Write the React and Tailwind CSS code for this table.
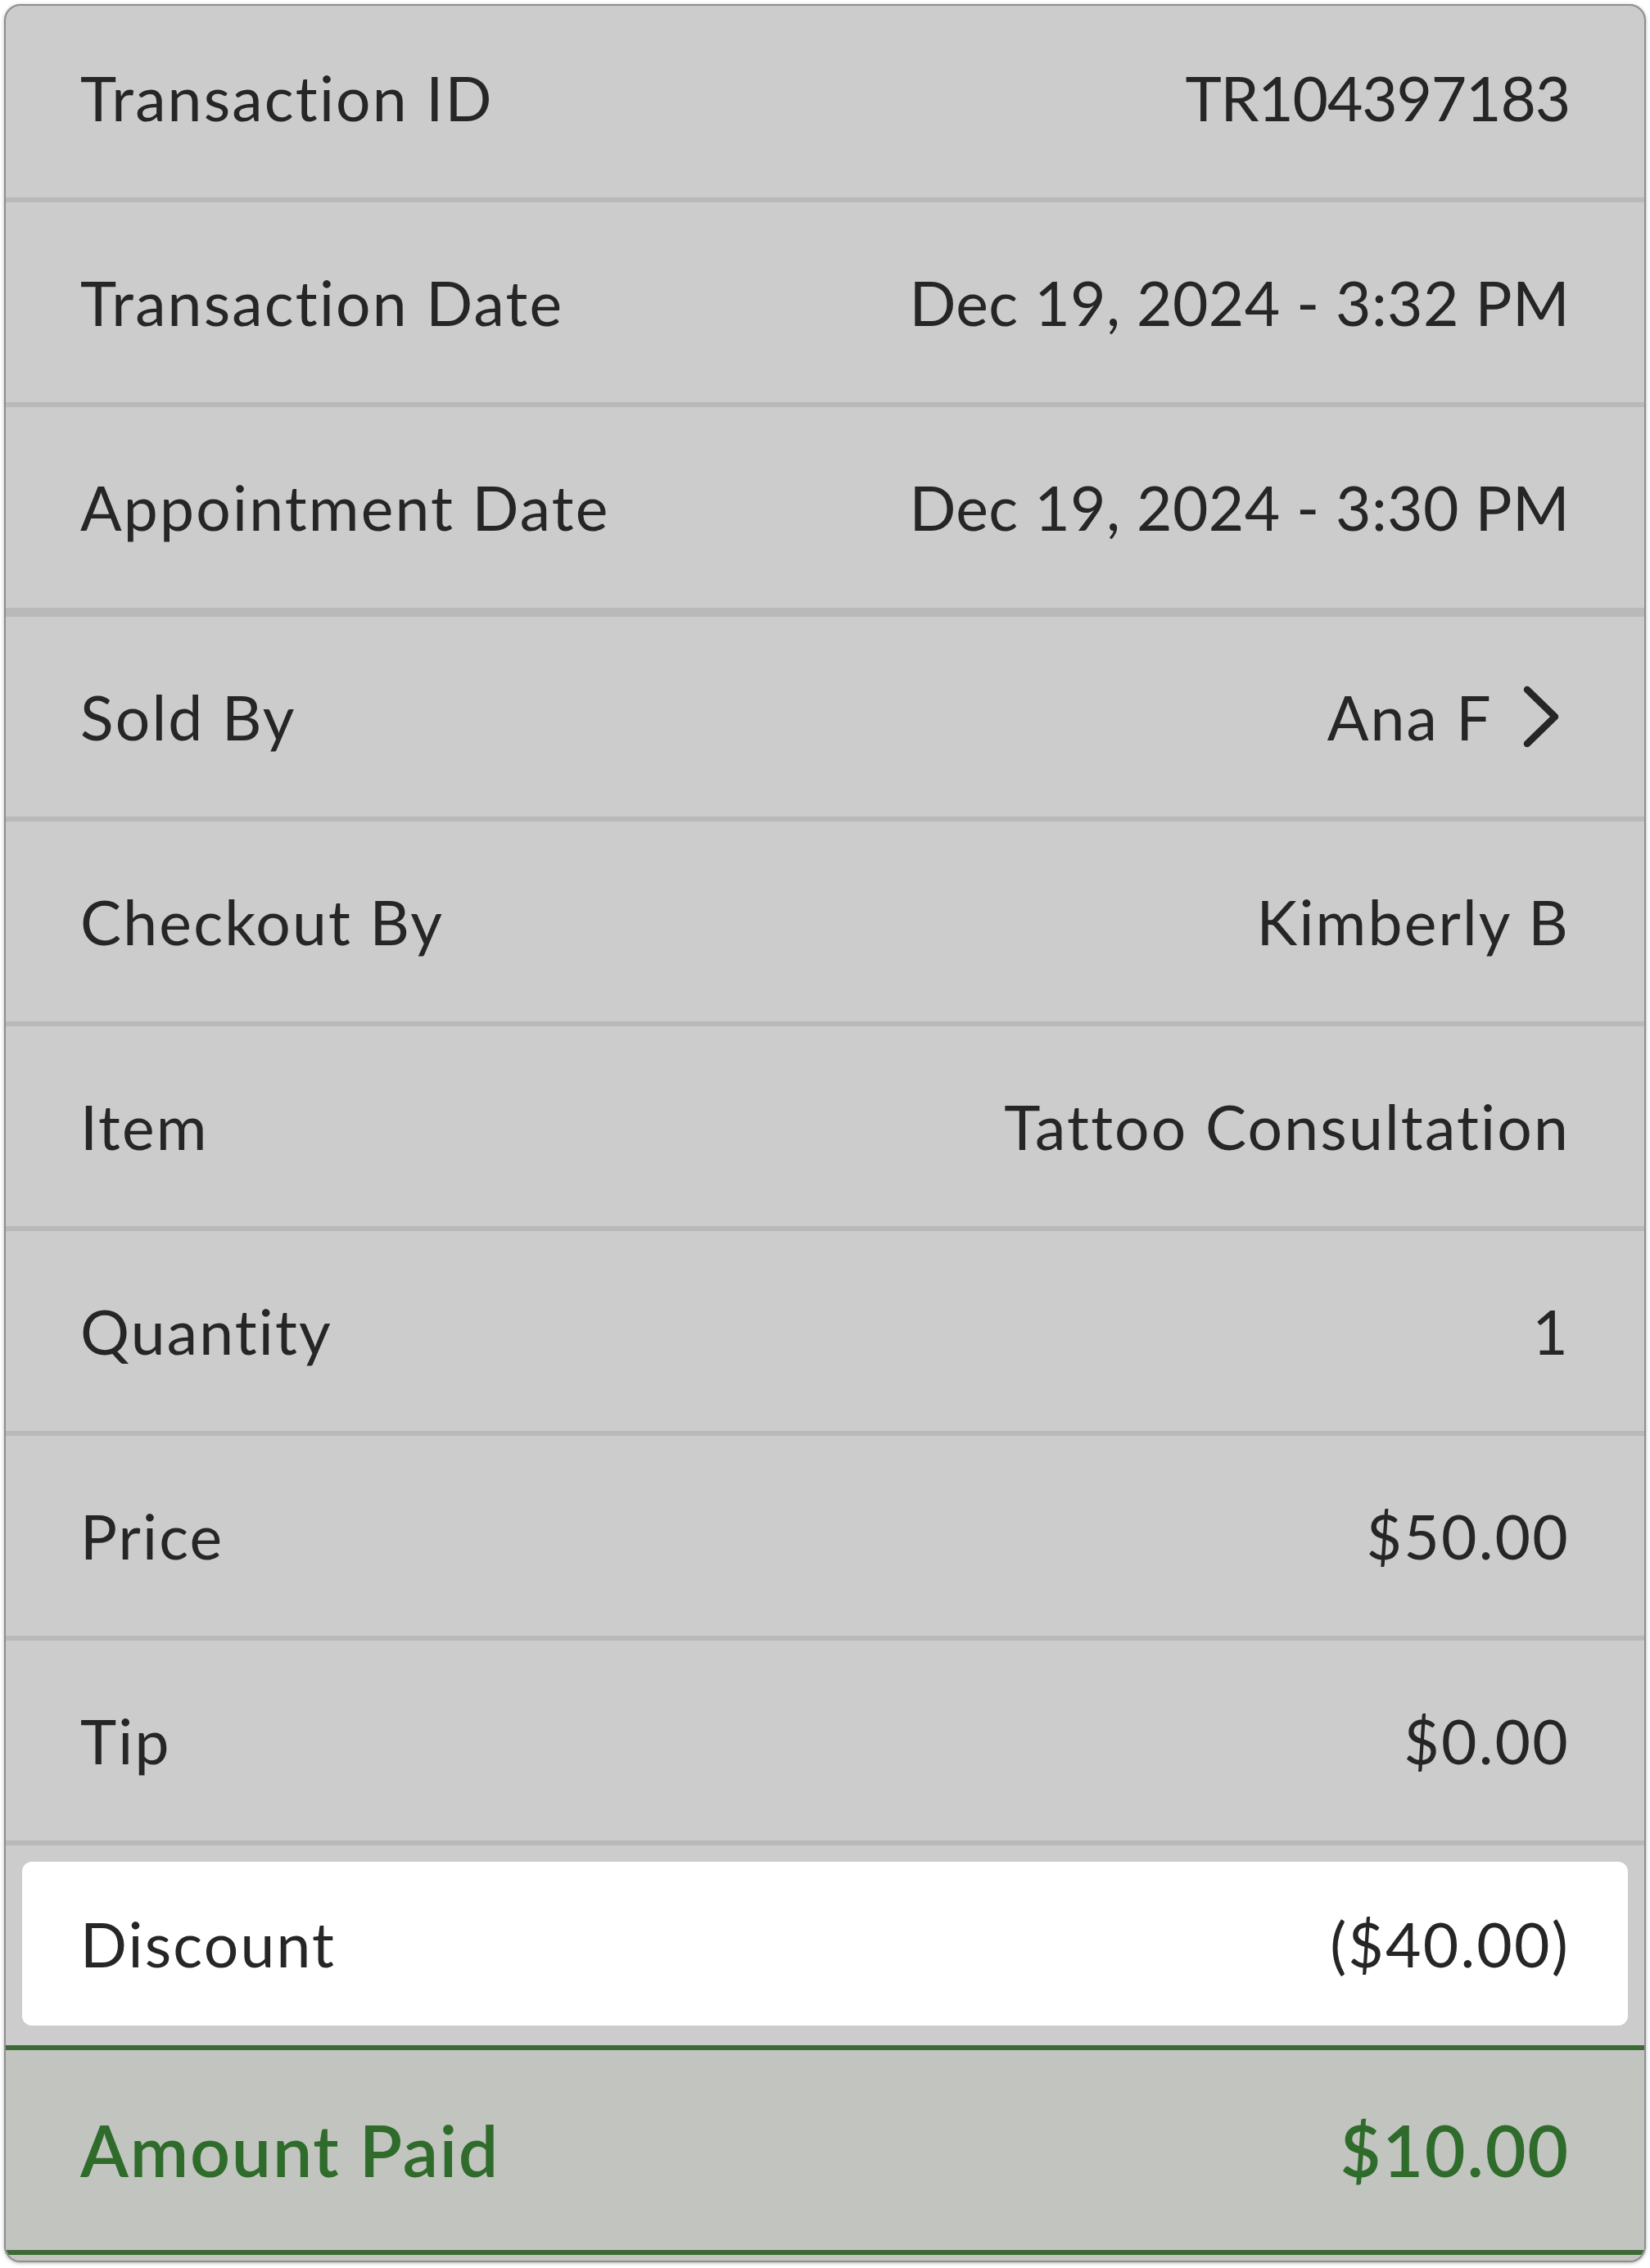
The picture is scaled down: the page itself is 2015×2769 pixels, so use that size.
import React from "react";

const rows = [
  { label: "Transaction ID", value: "TR104397183", tracking: "tracking-[-1.2px]" },
  { label: "Transaction Date", value: "Dec 19, 2024 - 3:32 PM", tracking: "tracking-[0.4px]" },
  { label: "Appointment Date", value: "Dec 19, 2024 - 3:30 PM", tracking: "tracking-[0.4px]" },
  { label: "Sold By", value: "Ana F", link: true },
  { label: "Checkout By", value: "Kimberly B" },
  { label: "Item", value: "Tattoo Consultation" },
  { label: "Quantity", value: "1" },
  { label: "Price", value: "$50.00" },
  { label: "Tip", value: "$0.00" },
];

const Chevron = () => (
  <svg width="62" height="84" viewBox="0 0 62 84" className="shrink-0">
    <path
      d="M8 9 L42 42 L8 75"
      fill="none"
      stroke="#262626"
      strokeWidth="8.5"
      strokeLinecap="round"
      strokeLinejoin="round"
    />
  </svg>
);

const App = () => {
  // alto de cada fila segun su posicion
  const rowClass = (i) => {
    if (i === 0) return "h-[240px] pb-[10px] border-b-[6px]";
    if (i === 2) return "h-[256px] border-b-[11px]";
    return "h-[250px] border-b-[6px]";
  };

  return (
    <div className="bg-white min-h-screen p-[5px] font-['Lato','Liberation_Sans',sans-serif] text-[#262626] [font-variant-ligatures:none]">
      <div className="w-[2005px] rounded-[20px] border-2 border-[#8e8e8e] bg-[#cccccc] overflow-hidden shadow-[0_1px_4px_rgba(0,0,0,0.3)]">
        {rows.map((row, i) => (
          <div
            key={row.label}
            className={`flex items-center justify-between border-[#b9b9b9] pl-[91px] pr-[91px] ${rowClass(i)}`}
          >
            <span className="text-[75px] leading-none tracking-[2.2px]">{row.label}</span>
            {row.link ? (
              <div className="flex items-center gap-[34px] -mr-[2px]">
                <span className="text-[75px] leading-none tracking-[2.2px]">{row.value}</span>
                <Chevron />
              </div>
            ) : (
              <span className={`text-[75px] leading-none ${row.tracking || "tracking-[2.2px]"}`}>
                {row.value}
              </span>
            )}
          </div>
        ))}

        <div className="h-[250px] border-b-[6px] border-[#3d6a36] px-[20px] pt-[20px]">
          <div className="h-[200px] rounded-[12px] bg-white flex items-center justify-between pl-[71px] pr-[71px]">
            <span className="text-[75px] leading-none tracking-[2.2px]">Discount</span>
            <span className="text-[75px] leading-none tracking-[2.2px]">($40.00)</span>
          </div>
        </div>

        <div className="h-[250px] border-b-[6px] border-[#3d6a36] bg-[#c1c4bf] flex items-center justify-between pl-[91px] pr-[91px] text-[#2f6b2b]">
          <span className="text-[86px] leading-none font-semibold tracking-[1.8px]">Amount Paid</span>
          <span className="text-[86px] leading-none font-semibold tracking-[1.8px]">$10.00</span>
        </div>
        <div className="h-[7px] bg-[#c1c4bf]"></div>
      </div>
    </div>
  );
};

export default App;
